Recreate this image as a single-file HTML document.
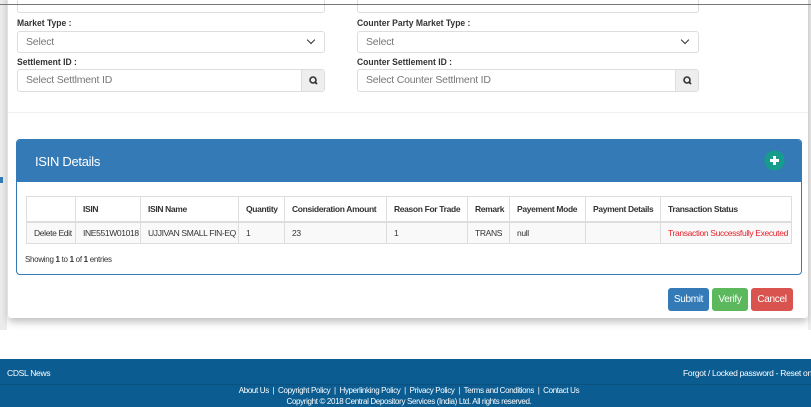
<!DOCTYPE html>
<html><head><meta charset="utf-8"><style>
*{box-sizing:border-box;margin:0;padding:0}
body{width:811px;height:407px;overflow:hidden;background:#fff;font-family:"Liberation Sans",Arial,sans-serif;position:relative;color:#333}
.a{position:absolute}
.strip{left:0;top:0;width:7px;height:330px;background:#ececec}
.card{left:8px;top:-10px;width:800px;height:328px;background:#fff;box-shadow:0 4px 8px rgba(0,0,0,.25);border-radius:3px}
.rstrip{left:808px;top:0;width:3px;height:330px;background:#eee}
.topline{left:0;top:4px;width:811px;height:1px;background:#777}
.inp{border:1px solid #ddd;border-radius:3px;background:#fff;font-size:10.5px;color:#777;padding-left:8px;line-height:20px;letter-spacing:-.2px}
.lbl{font-size:9.5px;font-weight:bold;color:#333;transform:scaleX(.9);transform-origin:left}
.chev{position:absolute;right:10px;top:5px;width:6px;height:6px;border-right:1.6px solid #333;border-bottom:1.6px solid #333;transform:rotate(45deg)}
.sbtn{position:absolute;right:0;top:0;width:23px;height:100%;background:#eee;border-left:1px solid #ddd}
.panel{left:16px;top:139px;width:786px;height:136px;border:1px solid #337ab7;border-radius:4px;overflow:hidden}
.ph{height:42px;background:#337ab7;color:#fff;font-size:13px;padding:14px 0 0 18px;letter-spacing:-.3px}
table{position:absolute;left:26px;top:196px;border-collapse:collapse;font-size:8.5px;width:766px;table-layout:fixed;letter-spacing:-.35px}
td,th{border:1px solid #ddd;padding:0 0 0 7px;text-align:left;height:24px;white-space:nowrap;overflow:hidden}
th{border-bottom:2px solid #ddd;height:25px}
tr.b td{background:#f9f9f9;height:22px}
.btn{top:288px;height:23px;color:#fff;font-size:10px;text-align:center;line-height:23px;border-radius:3px;letter-spacing:-.3px}
.foot{left:0;top:359px;width:811px;height:48px;background:#0b5c91;color:#fff;font-size:8.5px;letter-spacing:-.3px}
</style></head><body>
<div class="a strip"></div>
<div class="a rstrip"></div>
<div class="a card"></div>
<div class="a inp" style="left:17px;top:-8px;width:308px;height:21px"></div>
<div class="a inp" style="left:357px;top:-8px;width:342px;height:21px"></div>
<div class="a topline"></div>
<div class="a lbl" style="left:17px;top:18px">Market Type :</div>
<div class="a inp" style="left:17px;top:31px;width:308px;height:22px">Select<span class="chev"></span></div>
<div class="a lbl" style="left:357px;top:18px">Counter Party Market Type :</div>
<div class="a inp" style="left:357px;top:31px;width:342px;height:22px">Select<span class="chev"></span></div>
<div class="a lbl" style="left:17px;top:57px">Settlement ID :</div>
<div class="a inp" style="left:17px;top:69px;width:308px;height:23px;line-height:21px">Select Settlment ID<span class="sbtn"><svg width="23" height="21" viewBox="0 0 23 21"><circle cx="11" cy="10" r="3" fill="none" stroke="#333" stroke-width="1.6"/><line x1="13" y1="12" x2="15" y2="14" stroke="#333" stroke-width="1.8"/></svg></span></div>
<div class="a lbl" style="left:357px;top:57px">Counter Settlement ID :</div>
<div class="a inp" style="left:357px;top:69px;width:342px;height:23px;line-height:21px">Select Counter Settlment ID<span class="sbtn"><svg width="23" height="21" viewBox="0 0 23 21"><circle cx="11" cy="10" r="3" fill="none" stroke="#333" stroke-width="1.6"/><line x1="13" y1="12" x2="15" y2="14" stroke="#333" stroke-width="1.8"/></svg></span></div>
<div class="a" style="left:8px;top:112px;width:800px;height:1px;background:#f0f0f0"></div>
<div class="a" style="left:0;top:177px;width:3px;height:6px;background:#337ab7"></div>
<div class="a panel"><div class="ph">ISIN Details</div>
<div style="position:absolute;left:8px;top:115px;font-size:8px;letter-spacing:-.3px">Showing <b>1</b> to <b>1</b> of <b>1</b> entries</div></div>
<svg class="a" style="left:764px;top:150px" width="21" height="21"><circle cx="10.5" cy="10.5" r="10" fill="#169c8a"/><path d="M10.5 6v9M6 10.5h9" stroke="#fff" stroke-width="3"/></svg>
<table>
<colgroup><col style="width:49px"><col style="width:65px"><col style="width:98px"><col style="width:46px"><col style="width:102px"><col style="width:81px"><col style="width:42px"><col style="width:76px"><col style="width:75px"><col></colgroup>
<tr><th></th><th>ISIN</th><th>ISIN Name</th><th>Quantity</th><th>Consideration Amount</th><th>Reason For Trade</th><th>Remark</th><th>Payement Mode</th><th>Payment Details</th><th>Transaction Status</th></tr>
<tr class="b"><td>Delete Edit</td><td>INE551W01018</td><td>UJJIVAN SMALL FIN-EQ</td><td>1</td><td>23</td><td>1</td><td>TRANS</td><td>null</td><td></td><td style="color:#e8202a">Transaction Successfully Executed</td></tr>
</table>
<div class="a btn" style="left:668px;width:41px;background:#337ab7">Submit</div>
<div class="a btn" style="left:712px;width:36px;background:#5cb85c">Verify</div>
<div class="a btn" style="left:751px;width:42px;background:#d9534f">Cancel</div>
<div class="a foot">
<div class="a" style="left:7px;top:9px">CDSL News</div>
<div class="a" style="left:683px;top:9px;white-space:nowrap">Forgot / Locked password - Reset on your</div>
<div class="a" style="left:0;top:25px;width:811px;height:1px;background:#0a5080"></div>
<div class="a" style="left:0;top:27px;width:818px;text-align:center;white-space:nowrap;font-size:8px;letter-spacing:-.35px">About Us &nbsp;|&nbsp; Copyright Policy &nbsp;|&nbsp; Hyperlinking Policy &nbsp;|&nbsp; Privacy Policy &nbsp;|&nbsp; Terms and Conditions &nbsp;|&nbsp; Contact Us</div>
<div class="a" style="left:0;top:38px;width:818px;text-align:center;white-space:nowrap;font-size:8px;letter-spacing:-.35px">Copyright © 2018 Central Depository Services (India) Ltd. All rights reserved.</div>
</div>
</body></html>
